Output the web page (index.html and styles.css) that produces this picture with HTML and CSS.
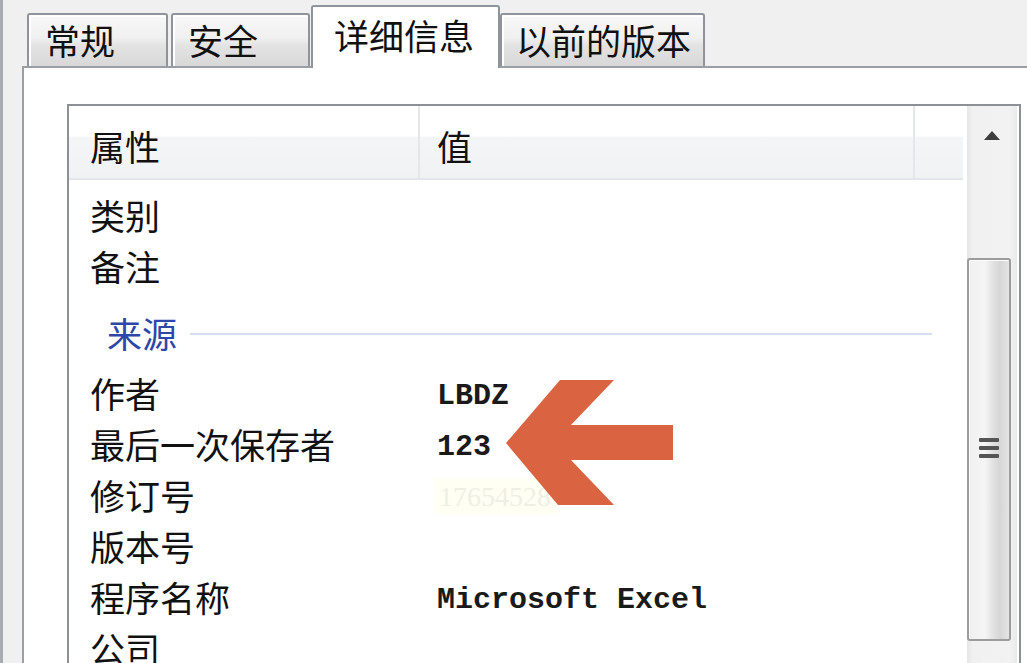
FILE: index.html
```html
<!DOCTYPE html>
<html lang="zh-CN">
<head>
<meta charset="utf-8">
<title>属性 - 详细信息</title>
<link rel="stylesheet" href="styles.css">
</head>
<body>
<div class="window">
  <div class="tabs">
    <div class="tab t1">常规</div>
    <div class="tab t2">安全</div>
    <div class="tab active">详细信息</div>
    <div class="tab t4">以前的版本</div>
  </div>
  <div class="panel">
    <div class="list">
      <div class="list-main">
        <div class="header">
          <div class="hcell c1">属性</div>
          <div class="hcell c2">值</div>
          <div class="hcell c3"></div>
        </div>
        <div class="rows">
          <div class="row"><span class="k">类别</span><span class="v"></span></div>
          <div class="row"><span class="k">备注</span><span class="v"></span></div>
          <div class="group"><span class="gname">来源</span><span class="gline"></span></div>
          <div class="row"><span class="k">作者</span><span class="v">LBDZ</span></div>
          <div class="row"><span class="k">最后一次保存者</span><span class="v">123</span></div>
          <div class="row"><span class="k">修订号</span><span class="v"><span class="ghost">17654528</span></span></div>
          <div class="row"><span class="k">版本号</span><span class="v"></span></div>
          <div class="row"><span class="k">程序名称</span><span class="v">Microsoft Excel</span></div>
          <div class="row"><span class="k">公司</span><span class="v"></span></div>
        </div>
      </div>
      <div class="scrollbar">
        <div class="sb-up"><span class="tri"></span></div>
        <div class="sb-thumb"><div class="grip"><i></i><i></i><i></i></div></div>
      </div>
    </div>
  </div>
</div>
<svg class="arrow" width="1027" height="663" viewBox="0 0 1027 663" aria-hidden="true">
  <polygon points="506,443 560,380 614,380 571,425 673,425 673,460 571,460 614,505 558,505" fill="#da6341"/>
</svg>
</body>
</html>
```

FILE: styles.css
```css
html, body {
  margin: 0;
  padding: 0;
  overflow: hidden;
}

body {
  width: 1027px;
  height: 663px;
  box-sizing: border-box;
  background: #f0f0f0;
  border-left: 3px solid #a9adb3;
  font-family: "Noto Sans CJK SC", "Noto Sans", sans-serif;
  color: #111;
  position: relative;
}

.window {
  width: 1024px;
  height: 663px;
  overflow: hidden;
}

/* ---------- tabs ---------- */
.tabs {
  display: flex;
  align-items: flex-end;
  height: 66px;
  padding-left: 24px;
  box-sizing: border-box;
  position: relative;
  z-index: 2;
}

.tab {
  box-sizing: border-box;
  height: 53px;
  border: 2px solid #8f939b;
  border-bottom: none;
  border-radius: 3px 3px 0 0;
  background: linear-gradient(#f8f8f8 0%, #f0f0f0 45%, #e3e3e3 60%, #d8d8d8 100%);
  box-shadow: inset 2px 2px 0 #ffffff;
  font-size: 35px;
  line-height: 50px;
  padding-left: 16px;
  white-space: nowrap;
  color: #111;
}

.t1 { width: 141px; margin-right: 3px; }
.t2 { width: 139px; padding-left: 15px; }
.t4 { width: 205px; padding-left: 14px; }

.tab.active {
  width: 189px;
  height: 63px;
  margin-left: 1px;
  margin-bottom: -2px;
  padding-top: 3px;
  padding-left: 21px;
  background: #ffffff;
  box-shadow: none;
  position: relative;
  z-index: 3;
}

/* ---------- panel ---------- */
.panel {
  margin-left: 19px;
  width: 1005px;
  height: 597px;
  background: #ffffff;
  border-top: 2px solid #9a9ea5;
  border-left: 2px solid #9a9ea5;
  padding-left: 43px;
  padding-top: 36px;
  box-sizing: border-box;
  position: relative;
  z-index: 1;
}

.list {
  width: 954px;
  height: 559px;
  box-sizing: border-box;
  border: 2px solid #8d9096;
  border-bottom: none;
  display: flex;
  background: #ffffff;
  overflow: hidden;
}

.list-main {
  width: 896px;
  flex: none;
}

/* ---------- header ---------- */
.header {
  display: grid;
  grid-template-columns: 349px 495px 1fr;
  height: 74px;
  box-sizing: border-box;
  border-bottom: 2px solid #e2e5ea;
  background: linear-gradient(#ffffff 0%, #ffffff 42%, #f4f5f7 43%, #f1f2f4 100%);
  margin-right: 2px;
}

.hcell {
  font-size: 35px;
  line-height: 52px;
  padding-top: 14px;
  box-sizing: border-box;
}

.c1 { padding-left: 21px; }
.c2 { padding-left: 17px; border-left: 2px solid #e4e6e9; }
.c3 { border-left: 2px solid #e4e6e9; }

/* ---------- rows ---------- */
.rows {
  padding-top: 9px;
}

.row {
  display: grid;
  grid-template-columns: 349px 1fr;
  height: 51px;
}

.k {
  font-size: 35px;
  line-height: 51px;
  padding-left: 21px;
  white-space: nowrap;
}

.v {
  font-family: "Liberation Mono", "DejaVu Sans Mono", monospace;
  font-weight: bold;
  font-size: 30px;
  line-height: 51px;
  padding-top: 4px;
  padding-left: 19px;
  white-space: pre;
  color: #1a1a1a;
}

.ghost {
  display: inline-block;
  font-family: "Liberation Serif", serif;
  font-weight: normal;
  font-size: 28px;
  line-height: 37px;
  padding: 0 6px 0 4px;
  margin-left: -2px;
  background: #fffff4;
  color: #efefe4;
}

.group {
  height: 76px;
  box-sizing: border-box;
  padding-top: 16px;
  padding-left: 38px;
  display: flex;
  align-items: flex-start;
}

.gname {
  font-size: 35px;
  line-height: 51px;
  color: #2c47a8;
}

.gline {
  flex: 1;
  height: 2px;
  background: #d6dff0;
  margin-top: 26px;
  margin-left: 13px;
  margin-right: 33px;
}

/* ---------- scrollbar ---------- */
.scrollbar {
  width: 50px;
  margin-left: 2px;
  flex: none;
  background: linear-gradient(90deg, #e6e6e6 0%, #f1f1f1 12%, #f2f2f2 85%, #e9e9e9 100%);
  display: flex;
  flex-direction: column;
}

.sb-up {
  height: 52px;
  display: flex;
  justify-content: center;
  padding-top: 25px;
  box-sizing: border-box;
}

.tri {
  width: 0;
  height: 0;
  border-left: 8px solid transparent;
  border-right: 8px solid transparent;
  border-bottom: 9px solid #3d3d3d;
}

.sb-thumb {
  margin-top: 100px;
  width: 44px;
  height: 383px;
  box-sizing: border-box;
  border: 2px solid #9c9c9c;
  border-radius: 3px;
  background: linear-gradient(90deg, #f0f0f0 0%, #f5f5f5 40%, #e0e0e0 62%, #d6d6d6 78%, #e4e4e4 100%);
  box-shadow: inset 1px 1px 0 #fbfbfb;
  display: flex;
  align-items: center;
  justify-content: center;
}

.grip {
  display: flex;
  flex-direction: column;
  gap: 4px;
  margin-top: -4px;
}

.grip i {
  display: block;
  width: 20px;
  height: 4px;
  background: #555555;
  border-radius: 1px;
}

/* ---------- overlay arrow ---------- */
.arrow {
  position: absolute;
  left: -3px;
  top: 0;
  pointer-events: none;
  z-index: 5;
}
```
